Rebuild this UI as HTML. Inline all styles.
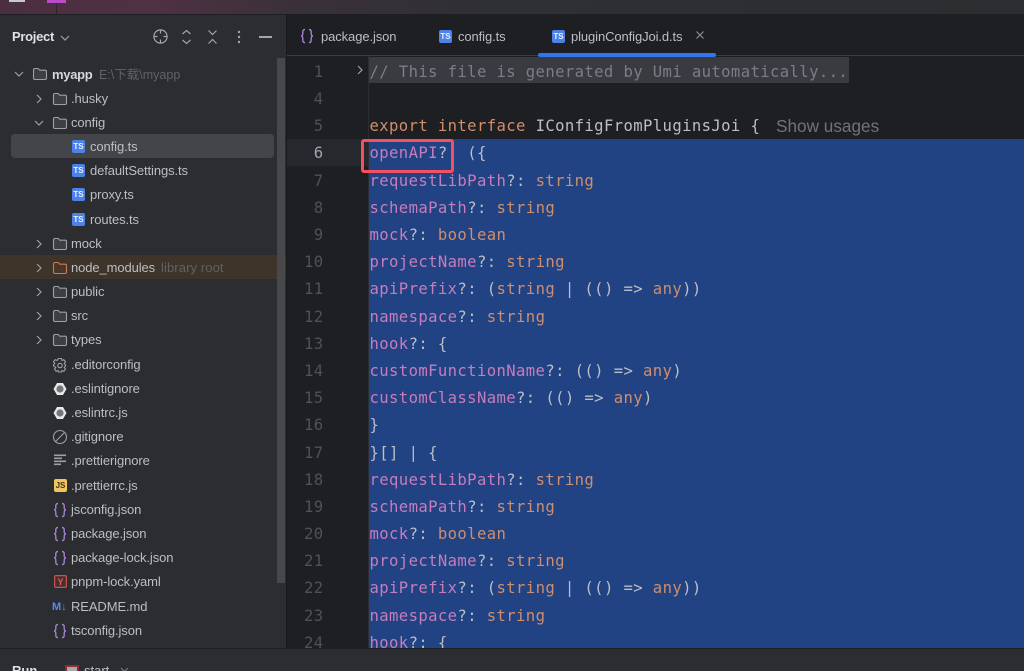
<!DOCTYPE html>
<html><head><meta charset="utf-8"><style>
html,body{margin:0;padding:0;background:#1e1f22}
#app{position:relative;width:1024px;height:671px;overflow:hidden;background:#1e1f22;font-family:"Liberation Sans","Noto Sans CJK SC",sans-serif}
.abs{position:absolute}
#top{left:0;top:0;width:1024px;height:14px;background:linear-gradient(90deg,#4a2f40 0,#4f3144 150px,#3a3138 290px,#2f3034 480px,#2b2d30 100%);border-bottom:1px solid #1e1f22}
#side{left:0;top:15px;width:286px;height:633px;background:#2b2d30}
#tree{left:0;top:62.4px;width:286px}
.r{position:relative;height:24.2px;line-height:24.2px;font-size:13px;color:#bcbec4;white-space:nowrap;letter-spacing:-.1px}
.r .t{position:absolute;top:0;left:71px}
.r svg,.r .ts{position:absolute}
.g{color:#5f6268}
.ts{width:13px;height:13px;left:72px;top:5px;background:#4d83e8;border-radius:2px;color:#e8effc;font:bold 8px/14px "Liberation Sans",sans-serif;text-align:center;letter-spacing:0}
#code{left:369.5px;top:58.9px;width:655px;height:589.1px;overflow:hidden;font:15.6px/27.2px "DejaVu Sans Mono",monospace;letter-spacing:.38px;color:#bcbec4;white-space:pre}
#code div{height:27.2px}
#nums{left:290px;top:58.9px;width:33.5px;height:589.1px;overflow:hidden;font:15.6px/27.2px "DejaVu Sans Mono",monospace;letter-spacing:.38px;color:#4e5157;text-align:right}
#nums div{height:27.2px}
.p{color:#c77dbb}.k{color:#cf8e6d}
.tab{font-size:13px;color:#bcbec4;letter-spacing:-.1px;line-height:16px;white-space:nowrap}
</style></head><body><div id="app">
<svg width="0" height="0" style="position:absolute"><defs>
<symbol id="fo" viewBox="0 0 16 16"><path d="M1.500 4a1.500 1.500 0 0 1 1.500-1.500h3.200l1.600 1.700h5.200a1.500 1.500 0 0 1 1.500 1.500v6.300a1.500 1.500 0 0 1-1.500 1.500H3A1.500 1.500 0 0 1 1.500 12z" fill="#3d3f43" stroke="#9da0a8" stroke-width="1.100"/></symbol>
<symbol id="ch" viewBox="0 0 10 10"><path d="M3 1l4 4-4 4" fill="none" stroke="#9da0a8" stroke-width="1.200"/></symbol>
<symbol id="cd" viewBox="0 0 10 10"><path d="M1 3l4 4 4-4" fill="none" stroke="#9da0a8" stroke-width="1.200"/></symbol>
<symbol id="js" viewBox="0 0 16 16"><path d="M6 1.500C4.500 1.500 3.800 2.300 3.800 3.800v2c0 1.100-.7 2.200-1.800 2.200 1.100 0 1.800 1.100 1.800 2.200v2c0 1.500.7 2.300 2.200 2.300M10 1.500c1.500 0 2.200.8 2.200 2.300v2c0 1.100.7 2.200 1.800 2.200-1.100 0-1.800 1.100-1.800 2.200v2c0 1.500-.7 2.300-2.200 2.300" fill="none" stroke="#a67fd6" stroke-width="1.400"/></symbol>
<symbol id="es" viewBox="0 0 16 16"><path d="M5 2h6l3.500 6-3.500 6H5L1.500 8z" fill="#e9e9ea"/><circle cx="8" cy="8" r="3.600" fill="#73767c"/></symbol>
</defs></svg>

<div class="abs" id="top"></div>
<div class="abs" style="left:9px;top:0;width:16px;height:2px;background:#c9cacc"></div>
<div class="abs" style="left:47px;top:0;width:19px;height:3px;background:#b84cc9"></div>
<div class="abs" style="left:56px;top:3px;width:1px;height:11px;background:#2f2530"></div>

<div class="abs" id="side"></div>
<div class="abs" style="left:286px;top:15px;width:1px;height:633px;background:#1a1b1d"></div>

<div class="abs" style="left:12px;top:29px;font-size:13px;font-weight:bold;color:#dfe1e5;line-height:16px;letter-spacing:-.3px">Project</div>
<svg class="abs" style="left:60px;top:33px" width="10" height="10"><use href="#cd"/></svg>
<svg class="abs" style="left:152px;top:28px" width="17" height="17" viewBox="0 0 17 17" fill="none" stroke="#a2a5ab" stroke-width="1.200"><circle cx="8.500" cy="8.500" r="6.600"/><path d="M8.500 1.500v4M8.500 11.500v4M1.500 8.500h4M11.500 8.500h4"/></svg>
<svg class="abs" style="left:180px;top:29px" width="13" height="16" viewBox="0 0 13 16" fill="none" stroke="#a2a5ab" stroke-width="1.200"><path d="M2.500 5l4-3.500 4 3.500M2.500 11l4 3.500 4-3.500"/></svg>
<svg class="abs" style="left:206px;top:29px" width="13" height="16" viewBox="0 0 13 16" fill="none" stroke="#a2a5ab" stroke-width="1.200"><path d="M2.500 1.500l4 4 4-4M2.500 14.500l4-4 4 4"/></svg>
<svg class="abs" style="left:237px;top:30px" width="4" height="14" viewBox="0 0 4 14" fill="#a2a5ab"><circle cx="2" cy="2" r="1.200"/><circle cx="2" cy="7" r="1.200"/><circle cx="2" cy="12" r="1.200"/></svg>
<div class="abs" style="left:259px;top:36px;width:13px;height:1.500px;background:#a2a5ab"></div>

<div class="abs" style="left:11px;top:134px;width:263px;height:24px;background:#43454a;border-radius:4px"></div>
<div class="abs" style="left:0;top:255px;width:286px;height:24px;background:#3e3429"></div>
<div class="abs" style="left:277px;top:58px;width:8px;height:525px;background:#4b4d50;opacity:.85"></div>

<div class="abs" id="tree">
<div class="r"><svg style="left:14px;top:7px" width="10" height="10"><use href="#cd"/></svg><svg style="left:32px;top:4px" width="16" height="16"><use href="#fo"/></svg><span class="t" style="left:52px;top:1px;font-weight:bold;color:#d5d7dc;letter-spacing:-.3px">myapp</span><span class="t g" style="left:99px;top:1px;font-size:12.500px;letter-spacing:0">E:\下载\myapp</span></div>
<div class="r"><svg style="left:34px;top:7px" width="10" height="10"><use href="#ch"/></svg><svg style="left:52px;top:4px" width="16" height="16"><use href="#fo"/></svg><span class="t">.husky</span></div>
<div class="r"><svg style="left:34px;top:7px" width="10" height="10"><use href="#cd"/></svg><svg style="left:52px;top:4px" width="16" height="16"><use href="#fo"/></svg><span class="t">config</span></div>
<div class="r"><span class="ts">TS</span><span class="t" style="left:90px">config.ts</span></div>
<div class="r"><span class="ts">TS</span><span class="t" style="left:90px">defaultSettings.ts</span></div>
<div class="r"><span class="ts">TS</span><span class="t" style="left:90px">proxy.ts</span></div>
<div class="r"><span class="ts">TS</span><span class="t" style="left:90px">routes.ts</span></div>
<div class="r"><svg style="left:34px;top:7px" width="10" height="10"><use href="#ch"/></svg><svg style="left:52px;top:4px" width="16" height="16"><use href="#fo"/></svg><span class="t">mock</span></div>
<div class="r"><svg style="left:34px;top:7px" width="10" height="10"><use href="#ch"/></svg><svg style="left:52px;top:4px" width="16" height="16"><path d="M1.500 4a1.500 1.500 0 0 1 1.500-1.500h3.200l1.600 1.700h5.200a1.500 1.500 0 0 1 1.500 1.500v6.300a1.500 1.500 0 0 1-1.500 1.500H3A1.500 1.500 0 0 1 1.500 12z" fill="#4a3626" stroke="#c77d55" stroke-width="1.100"/></svg><span class="t">node_modules</span><span class="t g" style="left:161px;letter-spacing:.1px">library root</span></div>
<div class="r"><svg style="left:34px;top:7px" width="10" height="10"><use href="#ch"/></svg><svg style="left:52px;top:4px" width="16" height="16"><use href="#fo"/></svg><span class="t">public</span></div>
<div class="r"><svg style="left:34px;top:7px" width="10" height="10"><use href="#ch"/></svg><svg style="left:52px;top:4px" width="16" height="16"><use href="#fo"/></svg><span class="t">src</span></div>
<div class="r"><svg style="left:34px;top:7px" width="10" height="10"><use href="#ch"/></svg><svg style="left:52px;top:4px" width="16" height="16"><use href="#fo"/></svg><span class="t">types</span></div>
<div class="r"><svg style="left:52px;top:4px" width="16" height="16" viewBox="0 0 16 16" fill="none" stroke="#9da0a8" stroke-width="1.100"><path d="M6.500 1.500h3l.5 2 1.800-.8 1.700 2.100-1.300 1.700 1.300 1.500v1l-1.300 1.500 1.300 1.700-1.700 2.100-1.800-.8-.5 1.500h-3l-.5-1.500-1.800.8-1.700-2.100 1.300-1.700L1.500 9V8l1.300-1.500-1.300-1.700 1.700-2.100 1.800.8z"/><circle cx="8" cy="8.500" r="2.200"/></svg><span class="t">.editorconfig</span></div>
<div class="r"><svg style="left:52px;top:4px" width="16" height="16"><use href="#es"/></svg><span class="t">.eslintignore</span></div>
<div class="r"><svg style="left:52px;top:4px" width="16" height="16"><use href="#es"/></svg><span class="t">.eslintrc.js</span></div>
<div class="r"><svg style="left:52px;top:4px" width="16" height="16" viewBox="0 0 16 16" fill="none" stroke="#9da0a8" stroke-width="1.100"><circle cx="8" cy="8" r="6.500"/><path d="M3.500 12.500l9-9"/></svg><span class="t">.gitignore</span></div>
<div class="r"><svg style="left:54px;top:5px" width="12" height="12" viewBox="0 0 12 12" fill="#9da0a8"><rect width="12" height="1.600" y="0.500"/><rect width="8" height="1.600" y="3.500"/><rect width="12" height="1.600" y="6.500"/><rect width="7" height="1.600" y="9.500"/></svg><span class="t">.prettierignore</span></div>
<div class="r"><span class="ts" style="left:54px;background:#f2c55c;color:#3a3120">JS</span><span class="t">.prettierrc.js</span></div>
<div class="r"><svg style="left:52px;top:4px" width="16" height="16"><use href="#js"/></svg><span class="t">jsconfig.json</span></div>
<div class="r"><svg style="left:52px;top:4px" width="16" height="16"><use href="#js"/></svg><span class="t">package.json</span></div>
<div class="r"><svg style="left:52px;top:4px" width="16" height="16"><use href="#js"/></svg><span class="t">package-lock.json</span></div>
<div class="r"><span class="ts" style="left:54px;background:#4a2f31;box-shadow:inset 0 0 0 1.200px #c75450;color:#d9605c;font-size:9px">Y</span><span class="t">pnpm-lock.yaml</span></div>
<div class="r"><span class="abs" style="left:52px;top:0;font:bold 11px/24px 'Liberation Sans',sans-serif;color:#548af7;letter-spacing:0">M↓</span><span class="t">README.md</span></div>
<div class="r"><svg style="left:52px;top:4px" width="16" height="16"><use href="#js"/></svg><span class="t">tsconfig.json</span></div>
</div>

<!-- editor -->
<div class="abs" style="left:287px;top:55px;width:737px;height:1px;background:#393b40"></div>
<div class="abs" style="left:368px;top:56px;width:1px;height:592px;background:#2b2d30"></div>
<svg class="abs" style="left:299px;top:28px" width="16" height="16"><use href="#js"/></svg>
<div class="abs tab" style="left:321px;top:29px">package.json</div>
<div class="abs ts" style="left:439px;top:30px">TS</div>
<div class="abs tab" style="left:458px;top:29px">config.ts</div>
<div class="abs ts" style="left:552px;top:30px">TS</div>
<div class="abs tab" style="left:571px;top:29px">pluginConfigJoi.d.ts</div>
<svg class="abs" style="left:695px;top:30px" width="10" height="10" viewBox="0 0 10 10" fill="none" stroke="#8d9096" stroke-width="1.100"><path d="M1.500 1.500l7 7M8.500 1.500l-7 7"/></svg>
<div class="abs" style="left:538px;top:53px;width:178px;height:4px;background:#3574f0;border-radius:2px"></div>

<div class="abs" style="left:287px;top:139px;width:81px;height:27px;background:#26282e"></div>
<div class="abs" style="left:369px;top:57px;width:480px;height:26px;background:#393b40"></div>
<div class="abs" style="left:369px;top:139px;width:655px;height:509px;background:#214283"></div>
<svg class="abs" style="left:355px;top:65px" width="10" height="10"><use href="#ch"/></svg>

<div class="abs" id="nums"><div>1</div><div>4</div><div>5</div><div style="color:#a1a3ab">6</div><div>7</div><div>8</div><div>9</div><div>10</div><div>11</div><div>12</div><div>13</div><div>14</div><div>15</div><div>16</div><div>17</div><div>18</div><div>19</div><div>20</div><div>21</div><div>22</div><div>23</div><div>24</div></div>

<div class="abs" id="code"><div style="color:#7a7e85">// This file is generated by Umi automatically...</div><div> </div><div><span class="k">export interface</span> IConfigFromPluginsJoi {</div><div><span class="p">openAPI</span>?  ({</div><div><span class="p">requestLibPath</span>?: <span class="k">string</span></div><div><span class="p">schemaPath</span>?: <span class="k">string</span></div><div><span class="p">mock</span>?: <span class="k">boolean</span></div><div><span class="p">projectName</span>?: <span class="k">string</span></div><div><span class="p">apiPrefix</span>?: (<span class="k">string</span> | (() =&gt; <span class="k">any</span>))</div><div><span class="p">namespace</span>?: <span class="k">string</span></div><div><span class="p">hook</span>?: {</div><div><span class="p">customFunctionName</span>?: (() =&gt; <span class="k">any</span>)</div><div><span class="p">customClassName</span>?: (() =&gt; <span class="k">any</span>)</div><div>}</div><div>}[] | {</div><div><span class="p">requestLibPath</span>?: <span class="k">string</span></div><div><span class="p">schemaPath</span>?: <span class="k">string</span></div><div><span class="p">mock</span>?: <span class="k">boolean</span></div><div><span class="p">projectName</span>?: <span class="k">string</span></div><div><span class="p">apiPrefix</span>?: (<span class="k">string</span> | (() =&gt; <span class="k">any</span>))</div><div><span class="p">namespace</span>?: <span class="k">string</span></div><div><span class="p">hook</span>?: {</div></div>

<div class="abs" style="left:776px;top:116px;font-size:17.200px;line-height:20px;color:#6f737a;white-space:nowrap">Show usages</div>
<div class="abs" style="left:361px;top:139px;width:87px;height:28px;border:3px solid #f4505f;border-radius:3px"></div>

<!-- bottom -->
<div class="abs" style="left:0;top:648px;width:1024px;height:23px;background:#2b2d30;border-top:1px solid #1e1f22;box-sizing:border-box"></div>
<div class="abs" style="left:12px;top:663px;font-size:13px;font-weight:bold;color:#dfe1e5;line-height:16px">Run</div>
<div class="abs" style="left:65px;top:665px;width:10px;height:10px;border:2px solid #8c2f35;background:#a8a9ad"></div>
<div class="abs" style="left:84px;top:663px;font-size:13px;color:#bcbec4;line-height:16px">start</div>
<svg class="abs" style="left:120px;top:667px" width="9" height="9" viewBox="0 0 9 9" fill="none" stroke="#7a7d83" stroke-width="1.100"><path d="M1 1l7 7M8 1l-7 7"/></svg>
</div></body></html>
